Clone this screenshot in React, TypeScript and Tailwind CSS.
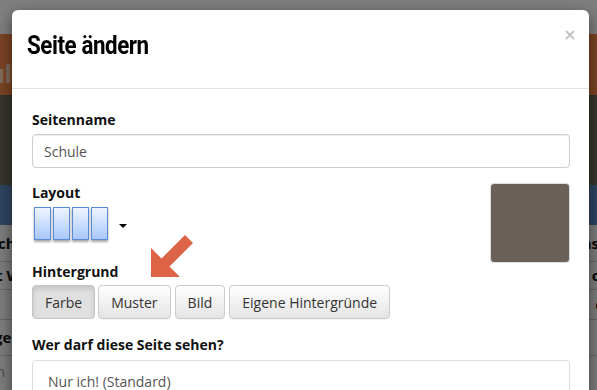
import { X } from 'lucide-react';

const Backdrop = () => {
  return (
    <div className="h-[390px] w-[597px] overflow-hidden bg-white flex flex-col">
      <div className="h-[34px] bg-white" />
      <div className="h-[61px] bg-[#f68848] flex items-end pb-[6px]">
        <span className="text-[#ffd9c0] font-bold text-[26px] leading-[30px] -ml-[54px]" style={{ fontFamily: 'Roboto, sans-serif' }}>
          Schule
        </span>
      </div>
      <div className="h-[90px] bg-[#706a5e]" />
      <div className="h-[40px] bg-[#5c8ac2]" />
      <div className="flex-1 bg-[#fafafa] flex flex-col text-[15px] font-bold text-[#111]" style={{ fontFamily: '"Open Sans", sans-serif' }}>
        <div className="h-[37px] border-b border-[#ccc] flex items-center justify-between">
          <span className="-ml-[2px]">chu</span>
          <span className="mr-[-2px]">as</span>
        </div>
        <div className="h-[28px] border-b border-[#ccc] flex items-center justify-between">
          <span className="-ml-[4px]">t W</span>
          <span className="mr-[-4px]">o</span>
        </div>
        <div className="h-[30px] border-b border-[#ccc] flex items-center justify-between">
          <span />
          <span className="mr-[-6px]">c</span>
        </div>
        <div className="h-[36px] border-b border-[#ccc] flex items-center justify-between">
          <span className="-ml-[6px]">ge</span>
          <span />
        </div>
        <div className="h-[30px] flex items-center">
          <span className="-ml-[4px] font-normal text-[#999]">n</span>
        </div>
      </div>
    </div>
  );
};

const LayoutIcon = () => {
  return (
    <div className="flex items-center gap-[11px]">
      <div className="flex gap-[2px] drop-shadow-[0_2px_1px_rgba(0,0,0,0.35)]">
        {[0, 1, 2, 3].map((i) => (
          <div
            key={i}
            className="w-[17px] h-[33px] border border-[#5b8ad6] bg-gradient-to-b from-[#eef4ff] to-[#a9c8fb]"
          />
        ))}
      </div>
      <div className="w-0 h-0 border-l-[4px] border-r-[4px] border-t-[4px] border-l-transparent border-r-transparent border-t-black mt-[5px]" />
    </div>
  );
};

const Btn = ({ label, active }: { label: string; active?: boolean }) => {
  return (
    <button
      className={
        active
          ? 'h-[34px] px-3 rounded-[4px] border border-[#c4c4c4] bg-[#e0e0e0] text-[#333] text-[14px] shadow-[inset_0_3px_5px_rgba(0,0,0,0.125)]'
          : 'h-[34px] px-3 rounded-[4px] border border-[#ccc] bg-gradient-to-b from-white to-[#e4e4e4] text-[#333] text-[14px] shadow-[0_1px_1px_rgba(0,0,0,0.05)]'
      }
    >
      {label}
    </button>
  );
};

export default function App() {
  return (
    <div className="relative h-[390px] w-[597px] overflow-hidden" style={{ fontFamily: '"Open Sans", sans-serif' }}>
      <Backdrop />
      <div className="absolute inset-0 bg-black/50" />

      {/* Modal */}
      <div className="absolute left-[12px] top-[10px] w-[577px] h-[420px] bg-white rounded-[6px] shadow-[0_5px_15px_rgba(0,0,0,0.5)]">
        <div className="h-[79px] border-b border-[#e5e5e5] flex items-start justify-between px-[15px] pt-[18px]">
          <h4
            className="text-[26px] font-bold text-black leading-[34px] tracking-[-0.5px] scale-x-[0.86] origin-left"
            style={{ fontFamily: 'Roboto, "Liberation Sans", sans-serif' }}
          >
            Seite ändern
          </h4>
          <button className="text-[#c4c4c4] mt-[0px] mr-[-3px]">
            <X size={14} strokeWidth={3.2} />
          </button>
        </div>

        <div className="px-[20px] pt-[21px] flex flex-col">
          <label className="text-[14px] font-bold text-[#111] leading-[20px]">Seitenname</label>
          <div className="mt-[4px] h-[34px] w-[538px] rounded-[4px] border border-[#ccc] flex items-center px-[11px] text-[14px] text-[#555] shadow-[inset_0_1px_1px_rgba(0,0,0,0.075)]">
            Schule
          </div>

          <div className="mt-[15px] flex justify-between">
            <div className="flex flex-col">
              <label className="text-[14px] font-bold text-[#111] leading-[20px]">Layout</label>
              <div className="mt-[4px] ml-[2px]">
                <LayoutIcon />
              </div>
              <label className="mt-[22px] text-[14px] font-bold text-[#111] leading-[20px]">Hintergrund</label>
            </div>
            <div className="w-[80px] h-[80px] rounded-[4px] bg-[#6b6057] border border-[#ddd] mr-[-1px]" />
          </div>

          <div className="mt-[3px] flex gap-[3px]">
            <Btn label="Farbe" active />
            <Btn label="Muster" />
            <div className="flex gap-[4px] ml-[1px]">
              <Btn label="Bild" />
              <Btn label="Eigene Hintergründe" />
            </div>
          </div>

          <label className="mt-[16px] text-[14px] font-bold text-[#111] leading-[20px]">Wer darf diese Seite sehen?</label>
          <div className="mt-[5px] h-[40px] w-[538px] rounded-[4px] border border-[#ddd] flex items-start pt-[10px] px-[15px] text-[14px] text-[#555]">
            Nur ich! (Standard)
          </div>
        </div>
      </div>

      {/* annotation arrow */}
      <svg className="absolute left-[140px] top-[230px]" width="60" height="52" viewBox="140 230 60 52">
        <polygon
          points="185,235 193,243 169.5,266.5 180,277 151,277 151,248 161.5,258.5"
          fill="#dd6446"
        />
      </svg>
    </div>
  );
}
